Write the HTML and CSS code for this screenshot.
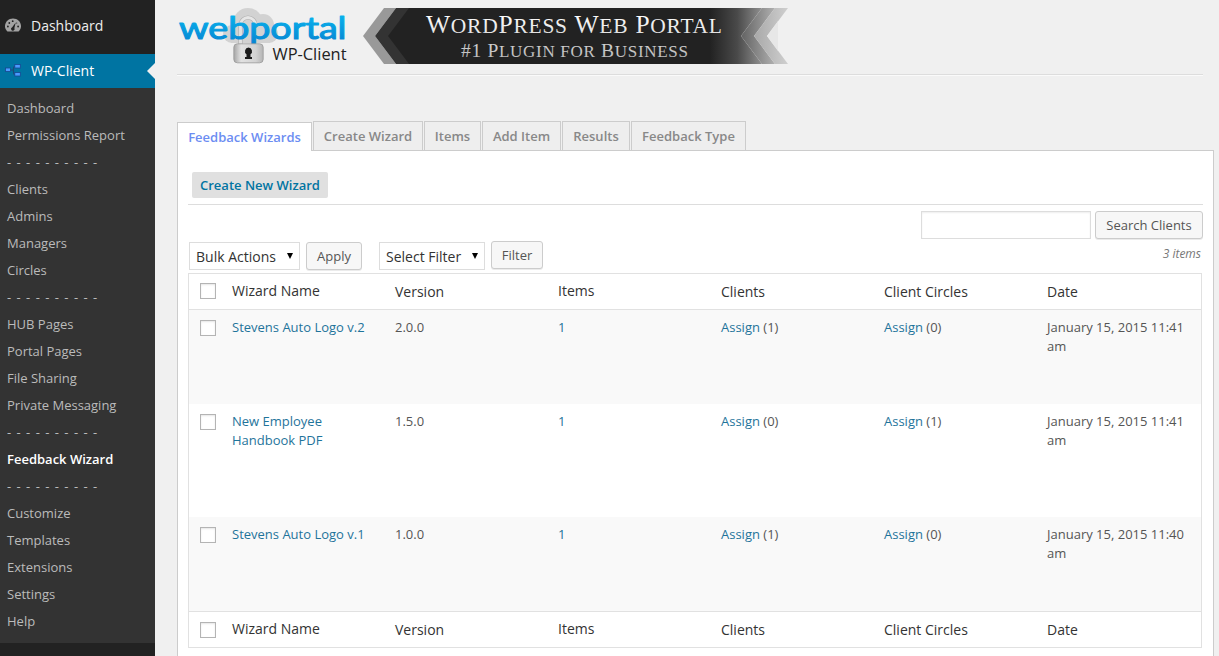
FILE: index.html
```html
<!DOCTYPE html>
<html lang="en">
<head>
<meta charset="utf-8">
<title>Feedback Wizards</title>
<link rel="stylesheet" href="styles.css">
</head>
<body>
<div class="layout">
  <nav class="sidebar">
    <a class="menu-item menu-top">
      <svg class="menu-icon" width="18" height="18" viewBox="0 0 18 18"><path d="M3.400 15.500C1.900 14 1 12.400 1 10.300 1 5.800 4.500 2.500 9 2.500s8 3.300 8 7.800c0 2.100-.9 3.700-2.400 5.200z" fill="#a3a3a3"/><g fill="#222"><circle cx="3.900" cy="10.500" r=".9"/><circle cx="5.300" cy="7" r=".9"/><circle cx="8.700" cy="5.200" r=".9"/><circle cx="14.100" cy="10.500" r=".9"/><circle cx="12.700" cy="7" r=".6"/><path d="M11.700 6.500L10.400 12a1.800 1.800 0 1 1-2.200-.8z"/></g></svg>
      <span>Dashboard</span>
    </a>
    <a class="menu-item menu-current">
      <svg class="menu-icon" width="18" height="18" viewBox="0 0 18 18"><path d="M6 9h3.500M12 5.500h-1q-1.500 0-1.500 1.500v4q0 2.500 1.500 2.500h1" fill="none" stroke="#1c4a78" stroke-width="1.200"/><g fill="#4a9bff" stroke="#164690" stroke-width=".8"><rect x="1.500" y="7" width="5" height="3.500"/><rect x="10.800" y="3.500" width="5.500" height="3.500"/><rect x="10.800" y="11.500" width="5.500" height="3.500"/></g></svg>
      <span>WP-Client</span>
    </a>
    <div class="submenu">
      <a>Dashboard</a><a>Permissions Report</a><a class="rule">- - - - - - - - - -</a>
      <a>Clients</a><a>Admins</a><a>Managers</a><a>Circles</a><a class="rule">- - - - - - - - - -</a>
      <a>HUB Pages</a><a>Portal Pages</a><a>File Sharing</a><a>Private Messaging</a><a class="rule">- - - - - - - - - -</a>
      <a class="selected">Feedback Wizard</a><a class="rule">- - - - - - - - - -</a>
      <a>Customize</a><a>Templates</a><a>Extensions</a><a>Settings</a><a>Help</a>
    </div>
  </nav>
  <main class="content">
    <header class="brand">
      <svg class="brand-art" width="620" height="66" viewBox="177 0 620 66">
        <defs>
          <linearGradient id="blue" x1="0" y1="14" x2="0" y2="42" gradientUnits="userSpaceOnUse"><stop offset="0" stop-color="#08b4ee"/><stop offset="1" stop-color="#0787d3"/></linearGradient>
          <linearGradient id="metal" x1="0" x2="1"><stop offset="0" stop-color="#a5a5a5"/><stop offset=".25" stop-color="#e2e2e2"/><stop offset=".75" stop-color="#d2d2d2"/><stop offset="1" stop-color="#b4b4b4"/></linearGradient>
          <linearGradient id="body" x1="710" x2="788" y1="0" y2="0" gradientUnits="userSpaceOnUse"><stop offset="0" stop-color="#222"/><stop offset=".35" stop-color="#4a4a4a"/><stop offset=".65" stop-color="#8c8c8c"/><stop offset="1" stop-color="#d0d0d0"/></linearGradient>
          <linearGradient id="mid" x1="741" x2="775" y1="0" y2="0" gradientUnits="userSpaceOnUse"><stop offset="0" stop-color="#626262"/><stop offset="1" stop-color="#b0b0b0"/></linearGradient>
          <linearGradient id="light" x1="754" x2="788" y1="0" y2="0" gradientUnits="userSpaceOnUse"><stop offset="0" stop-color="#a8a8a8"/><stop offset="1" stop-color="#cfcfcf"/></linearGradient>
          <linearGradient id="silver" x1="0" x2="0" y1="14" y2="58" gradientUnits="userSpaceOnUse"><stop offset="0" stop-color="#fff"/><stop offset="1" stop-color="#bbb"/></linearGradient>
        </defs>
        <g fill="#d2d2d2"><circle cx="232" cy="34" r="9"/><circle cx="248" cy="23" r="15"/><circle cx="263" cy="25" r="11"/><circle cx="269" cy="34" r="9"/><rect x="231" y="30" width="39" height="13"/></g>
        <g fill="none" stroke-linecap="round">
          <path d="M240.500 44V25a7.500 7.500 0 0 1 15 0v1" stroke="#b0b0b0" stroke-width="4.200"/>
          <path d="M240.500 44V25a7.500 7.500 0 0 1 15 0v1" stroke="#e6e6e6" stroke-width="2.800"/>
        </g>
        <text class="logo-word" x="179" y="38.500" textLength="167.500" lengthAdjust="spacingAndGlyphs">webportal</text>
        <path d="M240.500 29.500v5M240.500 41v4" fill="none" stroke="#e0e0e0" stroke-width="3"/>
        <rect x="233.800" y="43.800" width="29.400" height="19" rx="3.500" fill="url(#metal)" stroke="#999" stroke-width=".8"/>
        <path d="M248.500 47.500a3.700 3.700 0 0 1 2 6.700v2.800h1.500v2h-7v-2h1.500v-2.800a3.700 3.700 0 0 1 2-6.700z" fill="#1c1c1c"/>
        <text class="logo-sub" x="272.500" y="60" textLength="74" lengthAdjust="spacingAndGlyphs">WP-Client</text>
        <path d="M363 36l21-28h12l-21 28 21 28h-12z" fill="#999"/>
        <path d="M375 36l21-28h20v56h-20z" fill="#333"/>
        <path d="M388 36l21-28h353l-21 28 21 28H409z" fill="url(#body)"/>
        <path d="M741 36l21-28h13l-21 28 21 28h-13z" fill="url(#mid)"/>
        <path d="M754 36l21-28h13l-21 28 21 28h-13z" fill="url(#light)"/>
        <path d="M767 36l11-15v30z" fill="#e7e7e7"/>
        <g class="banner-text">
          <text x="426" y="33" font-size="25.500" textLength="296">W<tspan font-size="21.500">ORD</tspan>P<tspan font-size="21.500">RESS</tspan> W<tspan font-size="21.500">EB</tspan> P<tspan font-size="21.500">ORTAL</tspan></text>
          <text x="461" y="57" font-size="19.500" textLength="227">#1 P<tspan font-size="17">LUGIN FOR</tspan> B<tspan font-size="17">USINESS</tspan></text>
        </g>
      </svg>
    </header>
    <div class="tabs">
      <a class="tab active">Feedback Wizards</a><a class="tab w-create">Create Wizard</a><a class="tab w-items">Items</a><a class="tab w-add">Add Item</a><a class="tab w-results">Results</a><a class="tab w-type">Feedback Type</a>
    </div>
    <section class="panel">
      <div class="panel-head"><a class="create">Create New Wizard</a></div>
      <div class="search"><input class="search-box" type="text" aria-label="Search"><button class="button">Search Clients</button></div>
      <div class="actions">
        <div class="select bulk"><span>Bulk Actions</span><i></i></div>
        <button class="button apply">Apply</button>
        <div class="select filter-select"><span>Select Filter</span><i></i></div>
        <button class="button filter">Filter</button>
        <em class="count">3 items</em>
      </div>
      <table class="list">
        <thead><tr><th class="check"><b></b></th><th class="up">Wizard Name</th><th>Version</th><th class="up">Items</th><th>Clients</th><th>Client Circles</th><th class="last">Date</th></tr></thead>
        <tbody>
          <tr class="alt r1"><td><b></b></td><td><a>Stevens Auto Logo v.2</a></td><td>2.0.0</td><td><a>1</a></td><td><a>Assign</a> (1)</td><td><a>Assign</a> (0)</td><td>January 15, 2015 11:41 am</td></tr>
          <tr class="r2"><td><b></b></td><td><a>New Employee Handbook PDF</a></td><td>1.5.0</td><td><a>1</a></td><td><a>Assign</a> (0)</td><td><a>Assign</a> (1)</td><td>January 15, 2015 11:41 am</td></tr>
          <tr class="alt r3"><td><b></b></td><td><a>Stevens Auto Logo v.1</a></td><td>1.0.0</td><td><a>1</a></td><td><a>Assign</a> (1)</td><td><a>Assign</a> (0)</td><td>January 15, 2015 11:40 am</td></tr>
        </tbody>
        <tfoot><tr><th><b></b></th><th class="up">Wizard Name</th><th>Version</th><th class="up">Items</th><th>Clients</th><th>Client Circles</th><th>Date</th></tr></tfoot>
      </table>
    </section>
  </main>
</div>
</body>
</html>
```
FILE: styles.css
```css
* { box-sizing: border-box; }
body { margin: 0; background: #f0f0f0; color: #555; font: 13px/19px "Open Sans", sans-serif; overflow: hidden; }
.layout { display: flex; height: 656px; overflow: hidden; }
.sidebar { width: 155px; flex: none; background: #222; }
.menu-item { display: flex; align-items: center; height: 34px; padding: 0 0 2px 4px; color: #fff; font-size: 14px; }
.menu-icon { margin-right: 9px; }
.menu-top { height: 54px; padding-bottom: 4px; color: #eee; }
.menu-current { position: relative; background: #0074a2; }
.menu-current::after { content: ""; position: absolute; right: 0; top: 9px; border: 8px solid transparent; border-left-width: 0; border-right-color: #f0f0f0; }
.submenu { height: 555px; padding-top: 7px; background: #333; }
.submenu a { display: block; height: 27px; padding-left: 7px; line-height: 27px; color: #bbb; white-space: nowrap; }
.submenu .rule { letter-spacing: 1px; }
.submenu .selected { color: #fff; font-weight: 600; }

.content { flex: 1; padding: 0 5px 0 22px; min-width: 0; }
.brand { height: 75px; margin-right: 11px; border-bottom: 1px solid #ddd; box-shadow: 0 1px #fafafa; }
.brand-art { display: block; }
.logo-word { font: 400 31px Lato, sans-serif; fill: url(#blue); stroke: url(#blue); stroke-width: 1.1px; stroke-linejoin: round; }
.logo-sub { font: 400 17px "Open Sans", sans-serif; fill: #222; }
.banner-text { font-family: "Liberation Serif", serif; fill: url(#silver); }

.tabs { display: flex; align-items: flex-start; gap: 1px; height: 29px; margin-top: 46px; }
.tab { height: 29px; border: 1px solid #ccc; border-bottom: 0; background: #eee; color: #888; font-weight: 600; line-height: 29px; text-align: center; white-space: nowrap; }
.tab.active { position: relative; height: 29px; width: 135px; margin-top: 1px; background: #fff; color: #6c8df2; }
.w-create { width: 110px; }
.w-items { width: 57px; }
.w-add { width: 79px; }
.w-results { width: 68px; }
.w-type { width: 115px; }

.panel { height: 560px; padding: 0 10px; border: 1px solid #ccc; background: #fff; }
.panel-head { height: 54px; padding: 21px 0 0 4px; border-bottom: 1px solid #ddd; }
.create { display: inline-block; height: 26px; padding: 0 8px; border-radius: 2px; background: #e0e0e0; color: #0074a2; font-weight: 600; line-height: 26px; }
.search { display: flex; justify-content: flex-end; gap: 4px; padding-top: 6px; }
.search-box { width: 170px; height: 28px; margin: 0; border: 1px solid #ddd; background: #fff; box-shadow: inset 0 1px 2px rgba(0,0,0,.07); }
.button { width: 108px; height: 28px; padding: 0; border: 1px solid #ccc; border-radius: 3px; background: #f7f7f7; box-shadow: 0 1px 0 rgba(0,0,0,.08); color: #555; font: 13px/26px "Open Sans", sans-serif; white-space: nowrap; }
.actions { display: flex; height: 34px; padding: 2px 0 0 1px; }
.select { display: flex; align-items: center; justify-content: space-between; height: 28px; margin-top: 1px; padding: 1px 6px 0 6px; border: 1px solid #ddd; color: #333; font-size: 14px; }
.select i { border: 3.5px solid transparent; border-top: 6px solid #000; border-bottom: 0; margin-bottom: 2px; }
.bulk { width: 111px; }
.apply { width: 56px; margin: 1px 17px 0 6px; }
.filter-select { width: 106px; }
.filter { width: 52px; margin-left: 6px; }
.count { margin: 3px 2px 0 auto; color: #777; font-size: 12px; }

.list { width: 1014px; table-layout: fixed; border: 1px solid #e1e1e1; border-spacing: 0; }
.list th, .list td { padding: 8px 10px 0; text-align: left; vertical-align: top; }
.list th { height: 36px; width: 163px; color: #333; font-size: 14px; font-weight: 400; line-height: 20px; }
.list th.check { width: 33px; }
.list th.last { width: auto; }
.list .up { padding-top: 7px; }
.list thead th { border-bottom: 1px solid #e1e1e1; }
.list tfoot th { border-top: 1px solid #e1e1e1; }
.list a { color: #1f749b; }
.list b { display: block; width: 16px; height: 16px; margin: 2px 0 0 1px; border: 1px solid #b4b4b4; background: #fff; box-shadow: inset 0 1px 2px rgba(0,0,0,.1); }
.list thead b { margin-top: 1px; }
.alt { background: #f9f9f9; }
.r1 td { height: 94px; }
.r2 td { height: 113px; }
.r3 td { height: 94px; }
```
